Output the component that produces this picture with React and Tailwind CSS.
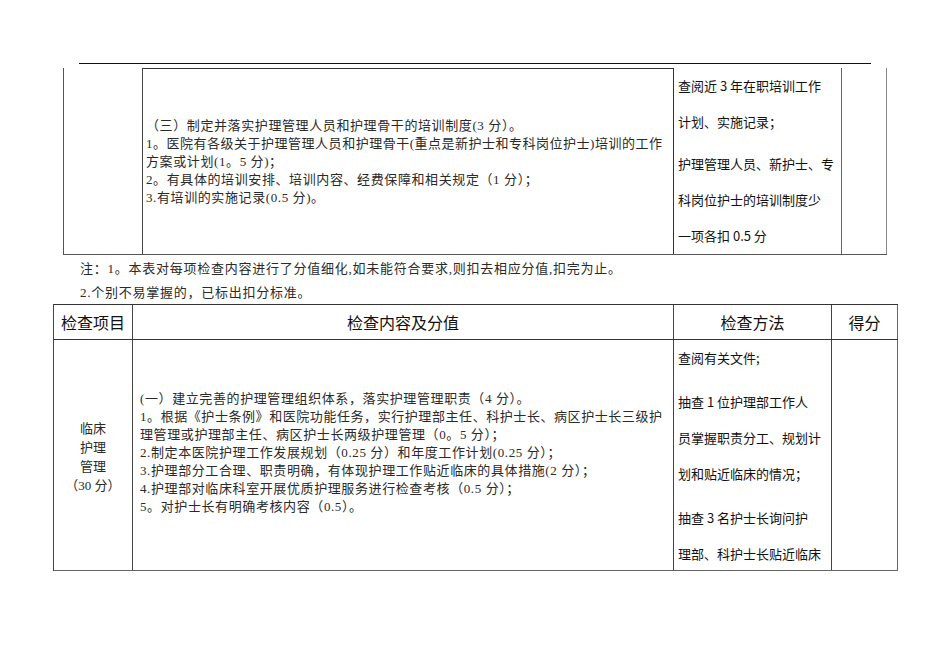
const serif = "font-['Liberation_Serif','Noto_Sans_CJK_SC',serif]";
const sans = "font-['Noto_Sans_CJK_SC','Liberation_Sans',sans-serif]";

const topLines = [
  { text: '（三）制定并落实护理管理人员和护理骨干的培训制度(3 分）。' },
  { text: '1。医院有各级关于护理管理人员和护理骨干(重点是新护士和专科岗位护士)培训的工作', full: true },
  { text: '方案或计划(1。5 分)；' },
  { text: '2。有具体的培训安排、培训内容、经费保障和相关规定（1 分）；' },
  { text: '3.有培训的实施记录(0.5 分)。' },
];

const bottomLines = [
  { text: '(一）建立完善的护理管理组织体系，落实护理管理职责（4 分）。' },
  { text: '1。根据《护士条例》和医院功能任务，实行护理部主任、科护士长、病区护士长三级护', full: true },
  { text: '理管理或护理部主任、病区护士长两级护理管理（0。5 分）；' },
  { text: '2.制定本医院护理工作发展规划（0.25 分）和年度工作计划(0.25 分）；' },
  { text: '3.护理部分工合理、职责明确，有体现护理工作贴近临床的具体措施(2 分）；' },
  { text: '4.护理部对临床科室开展优质护理服务进行检查考核（0.5 分）；' },
  { text: '5。对护士长有明确考核内容（0.5）。' },
];

const topMethod = [
  ['查阅近 3 年在职培训工作', '计划、实施记录；'],
  ['护理管理人员、新护士、专', '科岗位护士的培训制度少', '一项各扣 0.5 分'],
];

const bottomMethod = [
  ['查阅有关文件;'],
  ['抽查 1 位护理部工作人', '员掌握职责分工、规划计', '划和贴近临床的情况；'],
  ['抽查 3 名护士长询问护', '理部、科护士长贴近临床'],
];

function ContentLines({ lines, width }) {
  return (
    <div className={`${serif} text-[13px] leading-[18px] tracking-[0.6px] text-[#2a2a2a]`}>
      {lines.map((l, i) => (
        <div
          key={i}
          className={`whitespace-nowrap ${l.full ? '[text-align-last:justify] tracking-normal' : ''}`}
          style={l.full ? { width } : undefined}
        >
          {l.text}
        </div>
      ))}
    </div>
  );
}

function Method({ paras, gap }) {
  return (
    <div className={`${sans} text-[13px] leading-[36px] text-[#111] pl-[4px]`}>
      {paras.map((p, i) => (
        <div key={i} className={i < paras.length - 1 ? gap : ''}>
          {p.map((line) => (
            <div key={line} className="whitespace-nowrap">{line}</div>
          ))}
        </div>
      ))}
    </div>
  );
}

export default function App() {
  return (
    <div className="bg-white w-[950px] h-[672px] overflow-hidden">
      <div className="h-[63px]" />
      <div className="ml-[79px] w-[792px] h-px bg-[#111]" />
      <div className="h-[4px]" />

      {/* continued table from previous page */}
      <div className="ml-[63px] w-[824px] h-[187px] flex border-l border-b border-[#555]">
        <div className="w-[79px] border-r border-[#444]" />
        <div className="w-[531px] border-t border-r border-[#333] flex items-center pl-[3px]">
          <ContentLines lines={topLines} width={516} />
        </div>
        <div className="w-[168px] border-r border-[#666] overflow-hidden">
          <Method paras={topMethod} gap="mb-[6px]" />
        </div>
        <div className="w-[45px] border-r border-[#888]" />
      </div>

      <div className={`h-[49px] pt-[2px] pl-[80px] ${serif} text-[13px] leading-[24px] text-[#2a2a2a] tracking-[0.75px]`}>
        <div>注：1。本表对每项检查内容进行了分值细化,如未能符合要求,则扣去相应分值,扣完为止。</div>
        <div>2.个别不易掌握的，已标出扣分标准。</div>
      </div>

      <div className="ml-[53px] w-[845px] border-l border-[#444]">
        <div className={`flex h-[36px] border-t border-b border-[#333] ${sans} text-[16px] text-[#111]`}>
          <div className="w-[79px] border-r border-[#444] flex items-center justify-center">检查项目</div>
          <div className="w-[541px] border-r border-[#444] flex items-center justify-center">检查内容及分值</div>
          <div className="w-[158px] border-r border-[#444] flex items-center justify-center">检查方法</div>
          <div className="w-[66px] border-r border-[#666] flex items-center justify-center">得分</div>
        </div>
        <div className="flex h-[231px] border-b border-[#666]">
          <div className={`w-[79px] border-r border-[#444] flex flex-col items-center justify-center pt-[3px] ${serif} text-[13px] leading-[19px] text-[#2a2a2a]`}>
            <div>临床</div>
            <div>护理</div>
            <div>管理</div>
            <div>（30 分）</div>
          </div>
          <div className="w-[541px] border-r border-[#444] flex items-center pl-[7px] pb-[4px]">
            <ContentLines lines={bottomLines} width={522} />
          </div>
          <div className="w-[158px] border-r border-[#444] overflow-hidden">
            <Method paras={bottomMethod} gap="mb-[8px]" />
          </div>
          <div className="w-[66px] border-r border-[#666]" />
        </div>
      </div>
    </div>
  );
}
